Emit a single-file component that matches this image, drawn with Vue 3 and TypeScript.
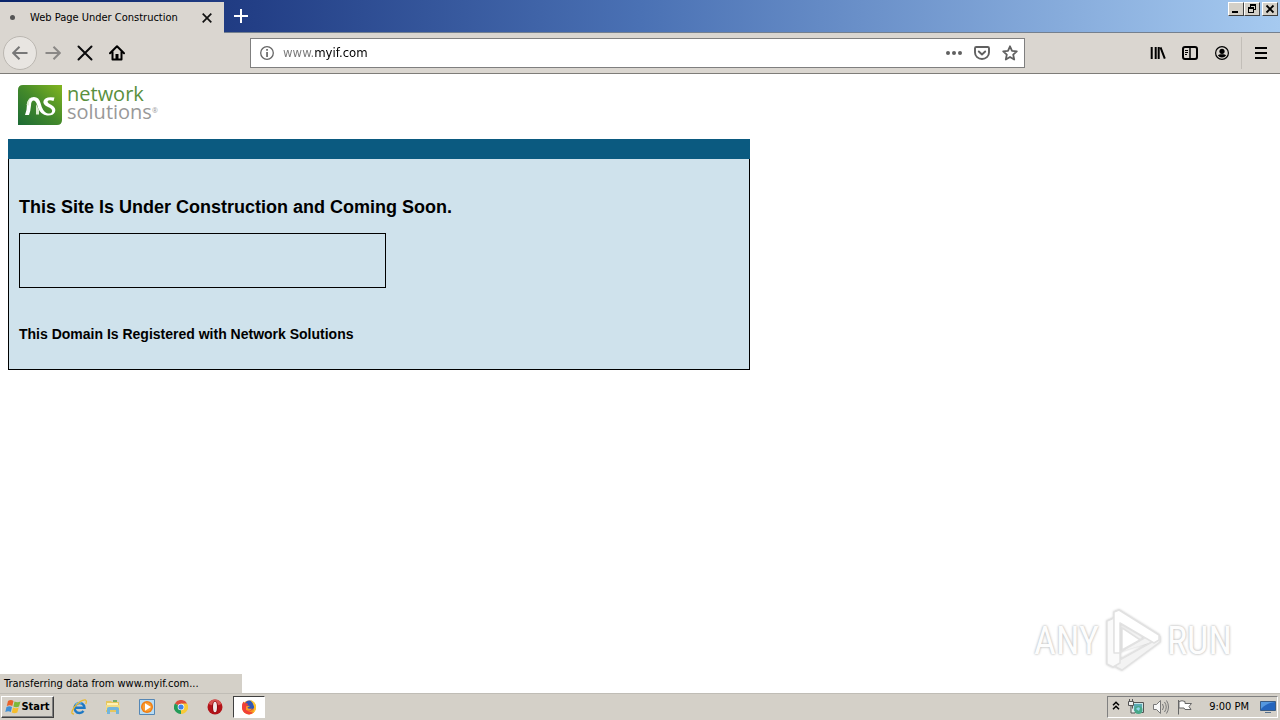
<script setup lang="ts">
import { ref } from 'vue'

const address = ref('www.myif.com')
const tabTitle = 'Web Page Under Construction'
</script>

<template>
  <div class="screen">
    <header class="titlebar">
      <div class="tab">
        <span class="throbber"></span>
        <span class="tab-title">{{ tabTitle }}</span>
        <button class="tab-close" aria-label="Close tab">
          <svg width="10" height="10" viewBox="0 0 10 10"><path d="M.7.7l8.6 8.6M9.3.7L.7 9.3" stroke="#111" stroke-width="1.7" /></svg>
        </button>
      </div>
      <button class="new-tab" aria-label="New tab">
        <svg width="14" height="14" viewBox="0 0 14 14"><path d="M7 0v14M0 7h14" stroke="#fff" stroke-width="2" /></svg>
      </button>
      <div class="window-buttons">
        <button class="win" aria-label="Minimize">
          <svg width="12" height="10" viewBox="0 0 12 10"><path d="M2 7h6v2H2z" /></svg>
        </button>
        <button class="win" aria-label="Restore">
          <svg width="12" height="10" viewBox="0 0 12 10"><path d="M4 0h6v6H8V5h1V2H5v1H4zM2 3h6v6H2zM3 5v3h4V5z" fill-rule="evenodd" /></svg>
        </button>
        <button class="win close" aria-label="Close">
          <svg width="12" height="10" viewBox="0 0 12 10"><path d="M2.500 1.500l7 7M9.500 1.500l-7 7" stroke="#000" stroke-width="1.800" /></svg>
        </button>
      </div>
    </header>

    <nav class="toolbar">
      <button class="tool back" aria-label="Back">
        <svg width="16" height="16" viewBox="0 0 16 16"><path d="M15.500 8H1.500M7.500 1.700L1.200 8l6.300 6.300" fill="none" stroke="#777" stroke-width="2" /></svg>
      </button>
      <button class="tool" aria-label="Forward">
        <svg width="16" height="16" viewBox="0 0 16 16"><path d="M.5 8h14M8.500 1.700L14.800 8l-6.300 6.300" fill="none" stroke="#8a8886" stroke-width="2" /></svg>
      </button>
      <button class="tool" aria-label="Stop">
        <svg width="16" height="16" viewBox="0 0 16 16"><path d="M1.500 1.500l13 13M14.500 1.500l-13 13" stroke="#0c0c0d" stroke-width="2" stroke-linecap="round" /></svg>
      </button>
      <button class="tool" aria-label="Home">
        <svg width="16" height="16" viewBox="0 0 16 16"><path d="M1 8.300L8 1.300l7 7M3.500 7v7.500h9V7" fill="none" stroke="#000" stroke-width="2" stroke-linecap="round" stroke-linejoin="round" /><path d="M6.500 9h3v5h-3z" /></svg>
      </button>
      <div class="spring"></div>
      <div class="urlbar">
        <button class="small" aria-label="Site information">
          <svg width="16" height="16" viewBox="0 0 16 16"><circle cx="8" cy="8" r="6.300" fill="none" stroke="#666" stroke-width="1.300" /><path d="M7.200 7h1.700v5H7.200zM7.200 4h1.700v1.800H7.200z" fill="#666" /></svg>
        </button>
        <input v-model="address" class="address" type="text" aria-label="Address" spellcheck="false" />
        <button class="small" aria-label="Page actions">
          <svg width="18" height="16" viewBox="0 0 18 16" fill="#606060"><circle cx="3" cy="8" r="2" /><circle cx="9" cy="8" r="2" /><circle cx="15" cy="8" r="2" /></svg>
        </button>
        <button class="small" aria-label="Save to Pocket">
          <svg width="16" height="16" viewBox="0 0 16 16" fill="none" stroke="#606060" stroke-width="1.900" stroke-linecap="round" stroke-linejoin="round"><path d="M2.300 2h11.400Q15 2 15 3.300v4.200a7 6.500 0 0 1-14 0V3.300Q1 2 2.300 2zM4.800 6.500L8 9.500l3.200-3" /></svg>
        </button>
        <button class="small" aria-label="Bookmark">
          <svg width="16" height="16" viewBox="0 0 16 16"><path d="M8 1.300l2 4.500 4.800.5-3.600 3.300 1 4.900L8 12l-4.200 2.500 1-4.900L1.200 6.300 6 5.800z" fill="none" stroke="#606060" stroke-width="1.800" stroke-linejoin="round" /></svg>
        </button>
      </div>
      <div class="spring"></div>
      <button class="tool" aria-label="Library">
        <svg width="16" height="16" viewBox="0 0 16 16"><path d="M1.700 2v12M5.700 2v12M8.700 2v12M10.500 2.300l4.300 11.400" fill="none" stroke="#000" stroke-width="2" /></svg>
      </button>
      <button class="tool" aria-label="Sidebars">
        <svg width="16" height="16" viewBox="0 0 16 16" fill="none" stroke="#000"><rect x="1" y="2" width="14" height="12" rx="2" stroke-width="2" /><path d="M8 2v12" stroke-width="1.500" /><path d="M3 5.500h3M3 7.500h3M3 9.500h2" /></svg>
      </button>
      <button class="tool" aria-label="Account">
        <svg width="16" height="16" viewBox="0 0 16 16"><circle cx="8" cy="8" r="6.400" fill="none" stroke="#000" stroke-width="1.200" /><circle cx="8" cy="6.300" r="2.600" /><path d="M3.800 10.200q1.700-1.200 3.200-1h2q1.500-.2 3.200 1A5 5 0 0 1 3.800 10.200z" /></svg>
      </button>
      <div class="divider"></div>
      <button class="tool menu" aria-label="Menu">
        <svg width="12" height="12" viewBox="0 0 12 12"><path d="M0 1h12M0 6h12M0 11h12" stroke="#000" stroke-width="2" /></svg>
      </button>
    </nav>

    <main class="page">
      <a class="brand" href="#" aria-label="Network Solutions">
        <svg width="44" height="40" viewBox="0 0 44 40">
          <defs>
            <linearGradient id="leaf" x1="1" y1="0" x2="0" y2="1"><stop offset="0" stop-color="#82b51f" /><stop offset=".5" stop-color="#43892a" /><stop offset="1" stop-color="#1c6a35" /></linearGradient>
          </defs>
          <path d="M5 0h39v35q0 5-5 5H0V5q0-5 5-5z" fill="url(#leaf)" />
          <path d="M7 30q2-5 2-11 1-7 7-7 5 0 6.500 6 2 8 6 10 4 1.500 5.500-1 1-3-4-5-5.500-2.500-4.500-6 1.500-5 11-3.500l-1 3.500q-5-1.500-6 .5 0 1.500 4 3.500 5 3 3.500 7-2 4-8 3.500-6-.5-9-7.500-1.500-7-4-7.500-3 0-3 5-.5 6-2 9.500z" fill="#fff" />
          <path d="M18 19q2 4 3 6v4.500h-3zM8.500 20q1-6 5-7.500-3 2-2.500 8z" fill="#dcecd0" />
        </svg>
        <span class="brand-name"><span class="network">network</span><span class="solutions">solutions<sup>®</sup></span></span>
      </a>
      <section class="panel">
        <div class="panel-bar"></div>
        <div class="panel-body">
          <h1>This Site Is Under Construction and Coming Soon.</h1>
          <div class="notice"></div>
          <h2>This Domain Is Registered with Network Solutions</h2>
        </div>
      </section>

      <div class="watermark">
        <span>ANY</span>
        <svg width="58" height="64" viewBox="0 0 58 64" fill="none" stroke-linejoin="round">
          <g stroke="#e2e2e2" stroke-width="1.500">
            <path d="M16 43l33-19 7 4v5L18 61l-6-3v-5l36-20" fill="#f3f3f3" />
            <path d="M10 9l-7 3v43l6 3 7-4V42h-6z" fill="#fafafa" />
            <path d="M10 3l5-2 40 25v5l-5 3-34-20v30h-6z" fill="#fff" />
            <path d="M18 19v22l18-10z" fill="#fff" />
          </g>
        </svg>
        <span>RUN</span>
      </div>
      <div class="status">Transferring data from www.myif.com...</div>
    </main>

    <footer class="taskbar">
      <button class="start">
        <svg width="16" height="16" viewBox="0 0 16 16">
          <path d="M3 2q3-2 5.500 0L7.300 7Q5 5.500 1.800 7z" fill="#e8622a" />
          <path d="M9.500 2.500q3 1.500 6 0L14 7.500q-3 1.500-5.600 0z" fill="#7cb83a" />
          <path d="M1.500 8q3-1.700 5.500 0l-1.200 5Q3.500 11.500.3 13z" fill="#3f8fd6" />
          <path d="M8 8.500q3 1.500 5.700 0l-1.400 5q-3 1.500-5.500 0z" fill="#f5bd2c" />
        </svg>
        <span>Start</span>
      </button>
      <div class="launchers">
        <button class="launch" aria-label="Internet Explorer">
          <svg width="16" height="16" viewBox="0 0 16 16" fill="none"><path d="M4 8.700h9.500A5 5 0 1 0 12.500 12" stroke="#1d78c4" stroke-width="2.400" /><path d="M4.500 5.500q2-2.500 6-1.500" stroke="#69b8ee" stroke-width="1.500" /><path d="M3 15Q-1.500 15 3.500 8 10 .5 14.500 1q1.500 .5 .3 4" stroke="#e9b92e" stroke-width="1.300" /></svg>
        </button>
        <button class="launch" aria-label="Explorer">
          <svg width="16" height="16" viewBox="0 0 16 16"><path d="M1 3V2h5l1 1h7v10H1z" fill="#e6c65d" /><path d="M2 4h11v6H2z" fill="#fff1b3" /><path d="M1 6h14v5H1z" fill="#f2dc84" /><path d="M2 15V9.500Q2 8 4 8h8q2 0 2 1.500V15h-3v-4H5v4z" fill="#72b5dc" /><path d="M8 1h4v2H8z" fill="#75ae65" /></svg>
        </button>
        <button class="launch" aria-label="Media Player">
          <svg width="16" height="16" viewBox="0 0 16 16"><path d="M.5.500h15v15H.5z" fill="#b8dcf4" stroke="#5587b5" /><circle cx="8" cy="8" r="6" fill="#f07d12" /><circle cx="8" cy="8" r="4.600" fill="#f99d32" /><path d="M6 4.200L12 8l-6 3.800z" fill="#fff" /></svg>
        </button>
        <button class="launch" aria-label="Chrome">
          <svg width="14" height="14" viewBox="0 0 14 14"><path d="M7 7L.9 3.500A7 7 0 0 1 13.100 3.500z" fill="#de4c3b" /><path d="M7 7L.9 3.500A7 7 0 0 0 7 14z" fill="#239b58" /><path d="M7 7L7 14A7 7 0 0 0 13.100 3.500H7z" fill="#f8ca38" /><circle cx="7" cy="7" r="3.300" fill="#fff" /><circle cx="7" cy="7" r="2.600" fill="#3f82ea" /></svg>
        </button>
        <button class="launch" aria-label="Opera">
          <svg width="16" height="16" viewBox="0 0 16 16"><circle cx="8" cy="8" r="7.500" fill="#b31218" /><path d="M1.500 5a7 7 0 0 1 13 0q-6.500 3-13 0z" fill="#d95350" /><ellipse cx="8" cy="8" rx="3" ry="6" fill="#8d0b10" /><ellipse cx="8" cy="8" rx="2" ry="5.300" fill="#f1e8e7" /></svg>
        </button>
        <button class="launch active" aria-label="Firefox">
          <svg width="16" height="16" viewBox="0 0 16 16"><circle cx="8" cy="8.500" r="7" fill="#f7941d" /><circle cx="8.500" cy="6.500" r="5" fill="#3158b8" /><path d="M1 8Q1 4 2.500 2.500l1 2Q5 3.500 6.500 4.500L7 6Q5.500 7 6 9q2 2.500 5.500.5-1.500 3.500-5 3.300l6 .8Q8.500 17 4 14 1 12 1 8z" fill="#f0403a" /><path d="M5 7.500Q6.500 6.500 9 7q-1 1-2.500 1.200Q7 10.500 11 9.500q-2 3.500-6 1.500z" fill="#fb9a24" /><path d="M9 1q5 1 6 6 .5 5-4 7.500 3-3 2-7Q12.500 4 9 1z" fill="#ffc52e" /></svg>
        </button>
      </div>
      <div class="tray">
        <button class="tray-icon" aria-label="Show hidden icons">
          <svg width="8" height="12" viewBox="0 0 8 12"><path d="M1 4.300l3-3 3 3M1 8.300l3-3 3 3" fill="none" stroke="#000" stroke-width="1.500" /></svg>
        </button>
        <svg width="18" height="16" viewBox="0 0 18 16"><path d="M5.500 3.500h11v10h-11z" fill="#c7e6e8" stroke="#555" /><path d="M7 5h8v7H7z" fill="#5aa9b4" /><circle cx="11.500" cy="11" r="4" fill="#48a889" /><path d="M9 10q2-3 4-1l-1 3z" fill="#8fd4ee" /><path d="M1.500 2.500h5v4h-5zM2.500 0v2M5.500 0v2M4 7v7h4" fill="#eee" stroke="#555" /></svg>
        <svg width="18" height="16" viewBox="0 0 18 16" fill="#f7f7f7" stroke="#777"><path d="M1.500 5.500h3l4-4v13l-4-4h-3z" /><path d="M10.500 5q2 3 0 6M12.500 3q3.500 5 0 10M14.500 1.500q4 6.500 0 13" fill="none" /></svg>
        <svg width="16" height="16" viewBox="0 0 16 16" fill="#fff" stroke="#666"><path d="M1.500 1v14.500M2 2.500q3-1.500 6 0v2h6.500l-2.500 3 2 3H8l-1-1.500H2z" /></svg>
        <span class="clock">9:00 PM</span>
        <button class="tray-icon" aria-label="Show desktop">
          <svg width="16" height="14" viewBox="0 0 16 14"><path d="M.5 1.500h15v9H.5z" fill="#2565bd" stroke="#3b5c84" /><path d="M1 2h14q-9 1-14 7z" fill="#5598df" /><path d="M5 12h6v1H5z" fill="#56708c" /></svg>
        </button>
      </div>
    </footer>
  </div>
</template>

<style>
html,
body {
  margin: 0;
}
</style>

<style scoped>
.screen {
  display: flex;
  flex-direction: column;
  height: 100vh;
  overflow: hidden;
  background: #fff;
  color: #000;
  font: 11px/14px Tahoma, "DejaVu Sans Condensed", "Noto Sans", sans-serif;
}
button {
  display: flex;
  align-items: center;
  justify-content: center;
  flex: none;
  margin: 0;
  padding: 0;
  border: 0;
  background: none;
  color: inherit;
  font: inherit;
}
svg {
  display: block;
  flex: none;
}
.titlebar {
  display: flex;
  flex: none;
  height: 33px;
  box-sizing: border-box;
  border-bottom: 1px solid #74808f;
  background: linear-gradient(90deg, #0a246a, #233f86 20%, #4a71b4 50%, #a6caf0);
}
.tab {
  display: flex;
  align-items: center;
  width: 224px;
  height: 31px;
  margin-top: 2px;
  box-sizing: border-box;
  padding: 0 12px 0 10px;
  background: #dad6d0;
}
.throbber {
  width: 5px;
  height: 5px;
  margin-right: 15px;
  border-radius: 50%;
  background: #555;
}
.tab-title {
  flex: 1;
  white-space: nowrap;
}
.new-tab {
  width: 34px;
  height: 32px;
}
.window-buttons {
  display: flex;
  align-items: flex-start;
  margin-left: auto;
  padding: 2px 2px 0 0;
}
.win {
  width: 16px;
  height: 14px;
  border: 1px solid;
  border-color: #fff #404040 #404040 #fff;
  background: #d4d0c8;
}
.win.close {
  margin-left: 2px;
}
.toolbar {
  display: flex;
  flex: none;
  align-items: center;
  height: 41px;
  box-sizing: border-box;
  padding: 0 0 0 3px;
  border-bottom: 1px solid #7e7c78;
  background: #dad6d0;
}
.tool {
  width: 32px;
  height: 32px;
}
.back {
  width: 34px;
  height: 34px;
  box-sizing: border-box;
  border: 1px solid #bbb7b1;
  border-radius: 50%;
  background: #e8e5e1;
}
.spring {
  flex: 0 1 117px;
}
.urlbar {
  display: flex;
  flex: 1;
  align-items: center;
  height: 30px;
  box-sizing: border-box;
  padding: 0 0 0 2px;
  border: 1px solid #7f7f7f;
  background: #fff;
}
.small {
  width: 28px;
  height: 28px;
}
.address {
  flex: 1;
  min-width: 0;
  height: 24px;
  padding: 0 0 0 2px;
  border: 0;
  outline: 0;
  background: linear-gradient(90deg, #777 34px, #000 34px);
  background-clip: text;
  color: transparent;
  font: 13px/24px Tahoma, "DejaVu Sans Condensed", "Noto Sans", sans-serif;
}
.divider {
  width: 1px;
  height: 32px;
  margin-left: 3px;
  background: #c2beb8;
}
.menu {
  width: 38px;
}
.page {
  position: relative;
  flex: 1;
  min-height: 0;
  padding: 11px 8px 0;
  font-family: Arial, "Liberation Sans", sans-serif;
}
.brand {
  display: flex;
  gap: 5px;
  width: max-content;
  height: 40px;
  margin: 0 0 14px 10px;
  text-decoration: none;
}
.brand-name {
  display: flex;
  flex-direction: column;
  color: #999;
  font: 20px/18px "Open Sans", "Noto Sans", sans-serif;
}
.network {
  color: #59903d;
}
.brand-name sup {
  font-size: 7px;
  line-height: 0;
  vertical-align: 6px;
}
.panel {
  max-width: 742px;
}
.panel-bar {
  height: 20px;
  background: #0b5a80;
}
.panel-body {
  padding: 37px 10px 25px;
  border: 1px solid #000;
  border-top: 0;
  background: #cfe2ec;
}
h1 {
  margin: 0 0 15px;
  font-size: 18px;
  line-height: 22px;
}
.notice {
  max-width: 365px;
  height: 53px;
  border: 1px solid #000;
}
h2 {
  margin: 36px 0 0;
  font-size: 14px;
  line-height: 20px;
}
.watermark {
  position: absolute;
  right: 48px;
  bottom: 20px;
  display: flex;
  align-items: center;
  gap: 5px;
  color: #fdfdfd;
  font: 38px/64px "Roboto Condensed", "Liberation Sans Narrow", sans-serif;
  text-shadow: 0 0 2px #bbb, 0 0 3px #ccc;
}
.watermark svg {
  filter: drop-shadow(0 0 1px #ccc);
}
.status {
  position: absolute;
  left: 0;
  bottom: 0;
  width: 242px;
  box-sizing: border-box;
  padding: 1px 4px 0;
  background: #d4d0c8;
  font: 11px/18px Tahoma, "DejaVu Sans Condensed", "Noto Sans", sans-serif;
}
.taskbar {
  display: flex;
  flex: none;
  align-items: center;
  height: 27px;
  box-sizing: border-box;
  padding: 0 2px 0 1px;
  border-top: 1px solid #c0bdb6;
  background: #d4d0c8;
}
.start {
  width: 53px;
  height: 22px;
  box-sizing: border-box;
  border: 1px solid;
  border-color: #fff #404040 #404040 #fff;
  box-shadow: inset -1px -1px #808080;
  font-weight: bold;
}
.launchers {
  display: flex;
  gap: 2px;
  margin-left: 9px;
}
.launch {
  width: 32px;
  height: 22px;
  box-sizing: border-box;
}
.launch.active {
  border: 1px solid;
  border-color: #404040 #fff #fff #404040;
  background: #fff;
}
.tray {
  display: flex;
  align-items: center;
  gap: 7px;
  height: 22px;
  margin-left: auto;
  box-sizing: border-box;
  padding: 0 1px 0 4px;
  border: 1px solid;
  border-color: #808080 #fff #fff #808080;
}
.clock {
  padding: 0 4px 0 9px;
}
</style>
